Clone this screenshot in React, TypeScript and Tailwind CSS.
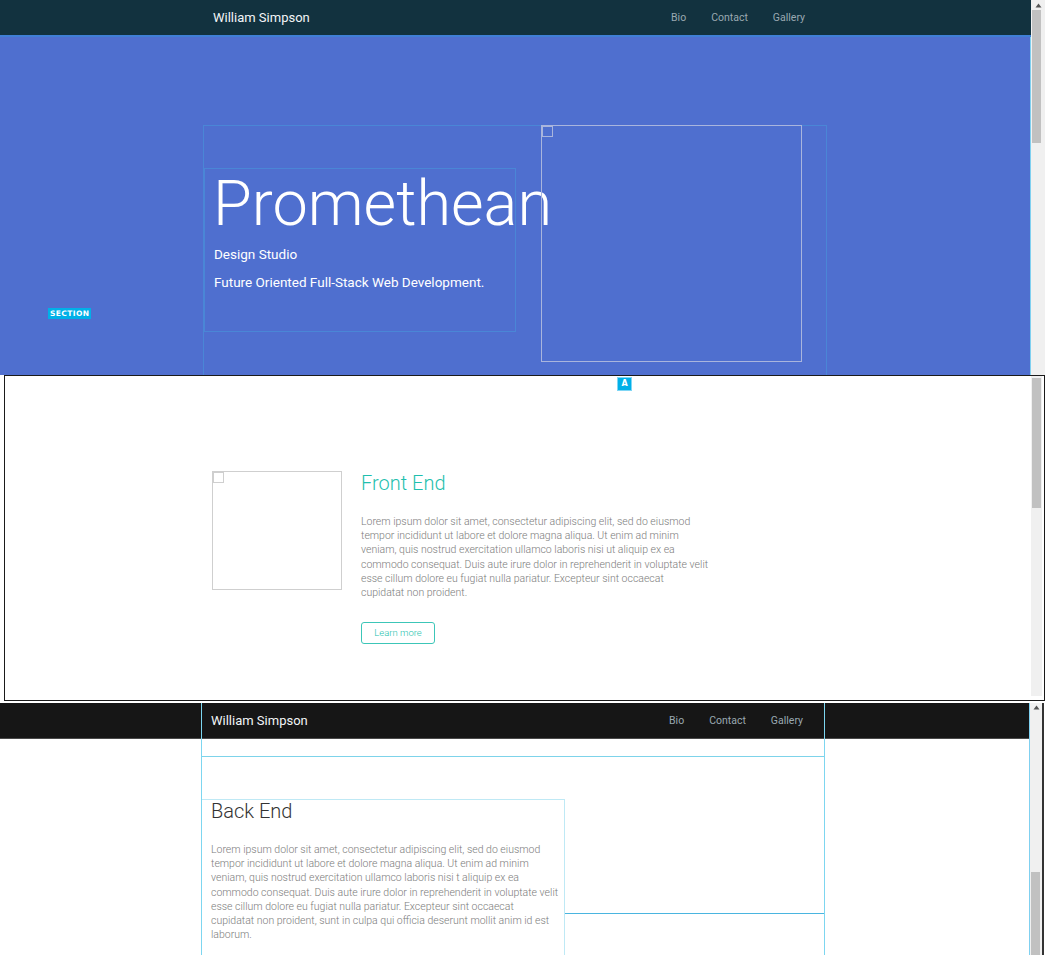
import React from 'react'

const lorem1 =
  'Lorem ipsum dolor sit amet, consectetur adipiscing elit, sed do eiusmod tempor incididunt ut labore et dolore magna aliqua. Ut enim ad minim veniam, quis nostrud exercitation ullamco laboris nisi ut aliquip ex ea commodo consequat. Duis aute irure dolor in reprehenderit in voluptate velit esse cillum dolore eu fugiat nulla pariatur. Excepteur sint occaecat cupidatat non proident.'

const lorem2a =
  'Lorem ipsum dolor sit amet, consectetur adipiscing elit, sed do eiusmod tempor incididunt ut labore et dolore magna aliqua. Ut enim ad minim veniam, quis nostrud exercitation ullamco laboris nisi t aliquip ex ea commodo consequat. Duis aute irure dolor in reprehenderit in voluptate velit esse cillum dolore eu fugiat nulla pariatur. Excepteur sint occaecat'
const lorem2b = 'cupidatat non proident, sunt in culpa qui officia deserunt mollit anim id est laborum.'

function UpArrow() {
  return (
    <svg width="7" height="5" viewBox="0 0 7 5" className="mx-auto">
      <path d="M3.5 0.5 L6.5 4.5 L0.5 4.5 Z" fill="#555" />
    </svg>
  )
}

function Navbar({ dark }: { dark: boolean }) {
  return (
    <nav
      className={
        dark
          ? 'h-[37px] bg-[#12323f] border-b-2 border-[#3f7fd6] flex items-center'
          : 'h-[36px] bg-[#161616] border-b border-[#4a4a4a] flex items-center'
      }
    >
      <div className={dark ? 'ml-[213px] w-[600px] flex items-center' : 'ml-[211px] w-[600px] flex items-center'}>
        <span className="text-[13px] text-[#f2f5f7]">William Simpson</span>
        <ul className="ml-auto flex gap-[25px] text-[10.5px] text-[#9aa9b1] pr-[8px]">
          <li>Bio</li>
          <li>Contact</li>
          <li>Gallery</li>
        </ul>
      </div>
    </nav>
  )
}

function ImgIcon({ light }: { light?: boolean }) {
  return (
    <div
      className={
        light
          ? 'w-[11px] h-[11px] border border-[#a9b5dd]'
          : 'w-[11px] h-[11px] border border-[#cfcfcf]'
      }
    />
  )
}

export default function App() {
  return (
    <div className="w-[1045px] h-[955px] overflow-hidden bg-white font-['Roboto',sans-serif]">
      {/* Pane 1: hero */}
      <div className="h-[375px] flex overflow-hidden relative">
        <div className="w-[1031px] flex flex-col">
          <Navbar dark />
          <section className="flex-1 bg-[#4f6fcf] border-r border-[#7fd0f0] relative overflow-hidden">
            <span className="absolute left-[48px] top-[271px] bg-[#00b0e8] text-white text-[7.5px] font-bold tracking-[0.4px] px-[2px] leading-[11px] font-['DejaVu_Sans',sans-serif]">
              SECTION
            </span>
            <div className="ml-[203px] mt-[88px] w-[624px] h-[300px] border border-[#4a86d6] flex">
              <div className="mt-[42px] w-[312px] h-[164px] border border-[#4a86d6] pl-[8px] text-white">
                <h1 className="text-[63px] font-light leading-[64px] mt-[3px] whitespace-nowrap">
                  Promethean
                </h1>
                <p className="text-[13.5px] mt-[8px] leading-[20px] pl-[1px]">Design Studio</p>
                <p className="text-[13.5px] mt-[8px] leading-[20px] pl-[1px] whitespace-nowrap">
                  Future Oriented Full-Stack Web Development.
                </p>
              </div>
              <div className="ml-[25px] -mt-[1px] w-[261px] h-[237px] border border-[#a9b5dd]">
                <ImgIcon light />
              </div>
            </div>
          </section>
        </div>
        <div className="w-[14px] bg-[#f0f0f0] pt-[3px] flex flex-col">
          <UpArrow />
          <div className="mt-[2px] ml-[1px] w-[9px] h-[133px] bg-[#c1c1c1]" />
        </div>
      </div>

      {/* Pane 2: front end */}
      <div className="ml-[4px] w-[1041px] h-[326px] border border-[#1a1a1a] flex relative">
        <span className="absolute left-[612px] top-[1px] w-[15px] h-[14px] bg-[#00b0e8] border border-[#7fd6f5] text-white text-[8px] font-bold flex items-center justify-center font-['DejaVu_Sans',sans-serif]">
          A
        </span>
        <div className="flex-1">
          <div className="ml-[207px] mt-[95px] flex">
            <div className="w-[130px] h-[119px] border border-[#cfcfcf]">
              <ImgIcon />
            </div>
            <div className="ml-[19px] w-[348px]">
              <h2 className="text-[20px] font-light text-[#1fbfae] leading-[24px]">Front End</h2>
              <p className="mt-[20px] text-[10.5px] leading-[14.2px] text-[#7c7c7c] font-light">{lorem1}</p>
              <button className="mt-[22px] h-[22px] w-[74px] border border-[#3cc6b8] rounded-[3px] text-[9.5px] text-[#24bfae] font-light">
                Learn more
              </button>
            </div>
          </div>
        </div>
        <div className="w-[11px] mr-[2px] h-[320px] bg-[#f0f0f0] flex flex-col pt-[2px]">
          <div className="ml-[1px] w-[9px] h-[130px] bg-[#c1c1c1]" />
        </div>
      </div>

      {/* Pane 3: back end */}
      <div className="mt-[2px] h-[252px] flex relative">
        <div className="w-[1029px] relative">
          <Navbar dark={false} />
          <div className="absolute top-0 left-[201px] w-[624px] h-full border-x border-[#7dd6f0] pointer-events-none" />
          <div className="ml-[201px] w-[624px]">
            <div className="h-[18px] border-b border-[#7dd3ea]" />
            <div className="mt-[42px] flex">
              <div className="w-[364px] h-[200px] border-t border-r border-[#bfe9f5] pl-[10px]">
                <h2 className="text-[20px] font-light text-[#333] leading-[20px] mt-[1px]">Back End</h2>
                <p className="mt-[22px] w-[349px] text-[10.5px] leading-[14.2px] text-[#7c7c7c] font-light">
                  {lorem2a}
                  <br />
                  {lorem2b}
                </p>
              </div>
              <div className="flex-1 h-[115px] border-b border-[#4ab5e0]" />
            </div>
          </div>
        </div>
        <div className="w-[13px] border-l border-[#7fd0f0] bg-[#f0f0f0] flex flex-col pt-[2px]">
          <UpArrow />
          <div className="mt-auto ml-[1px] w-[9px] h-[83px] bg-[#c1c1c1]" />
        </div>
        <div className="w-[2px] bg-[#333]" />
      </div>
    </div>
  )
}
